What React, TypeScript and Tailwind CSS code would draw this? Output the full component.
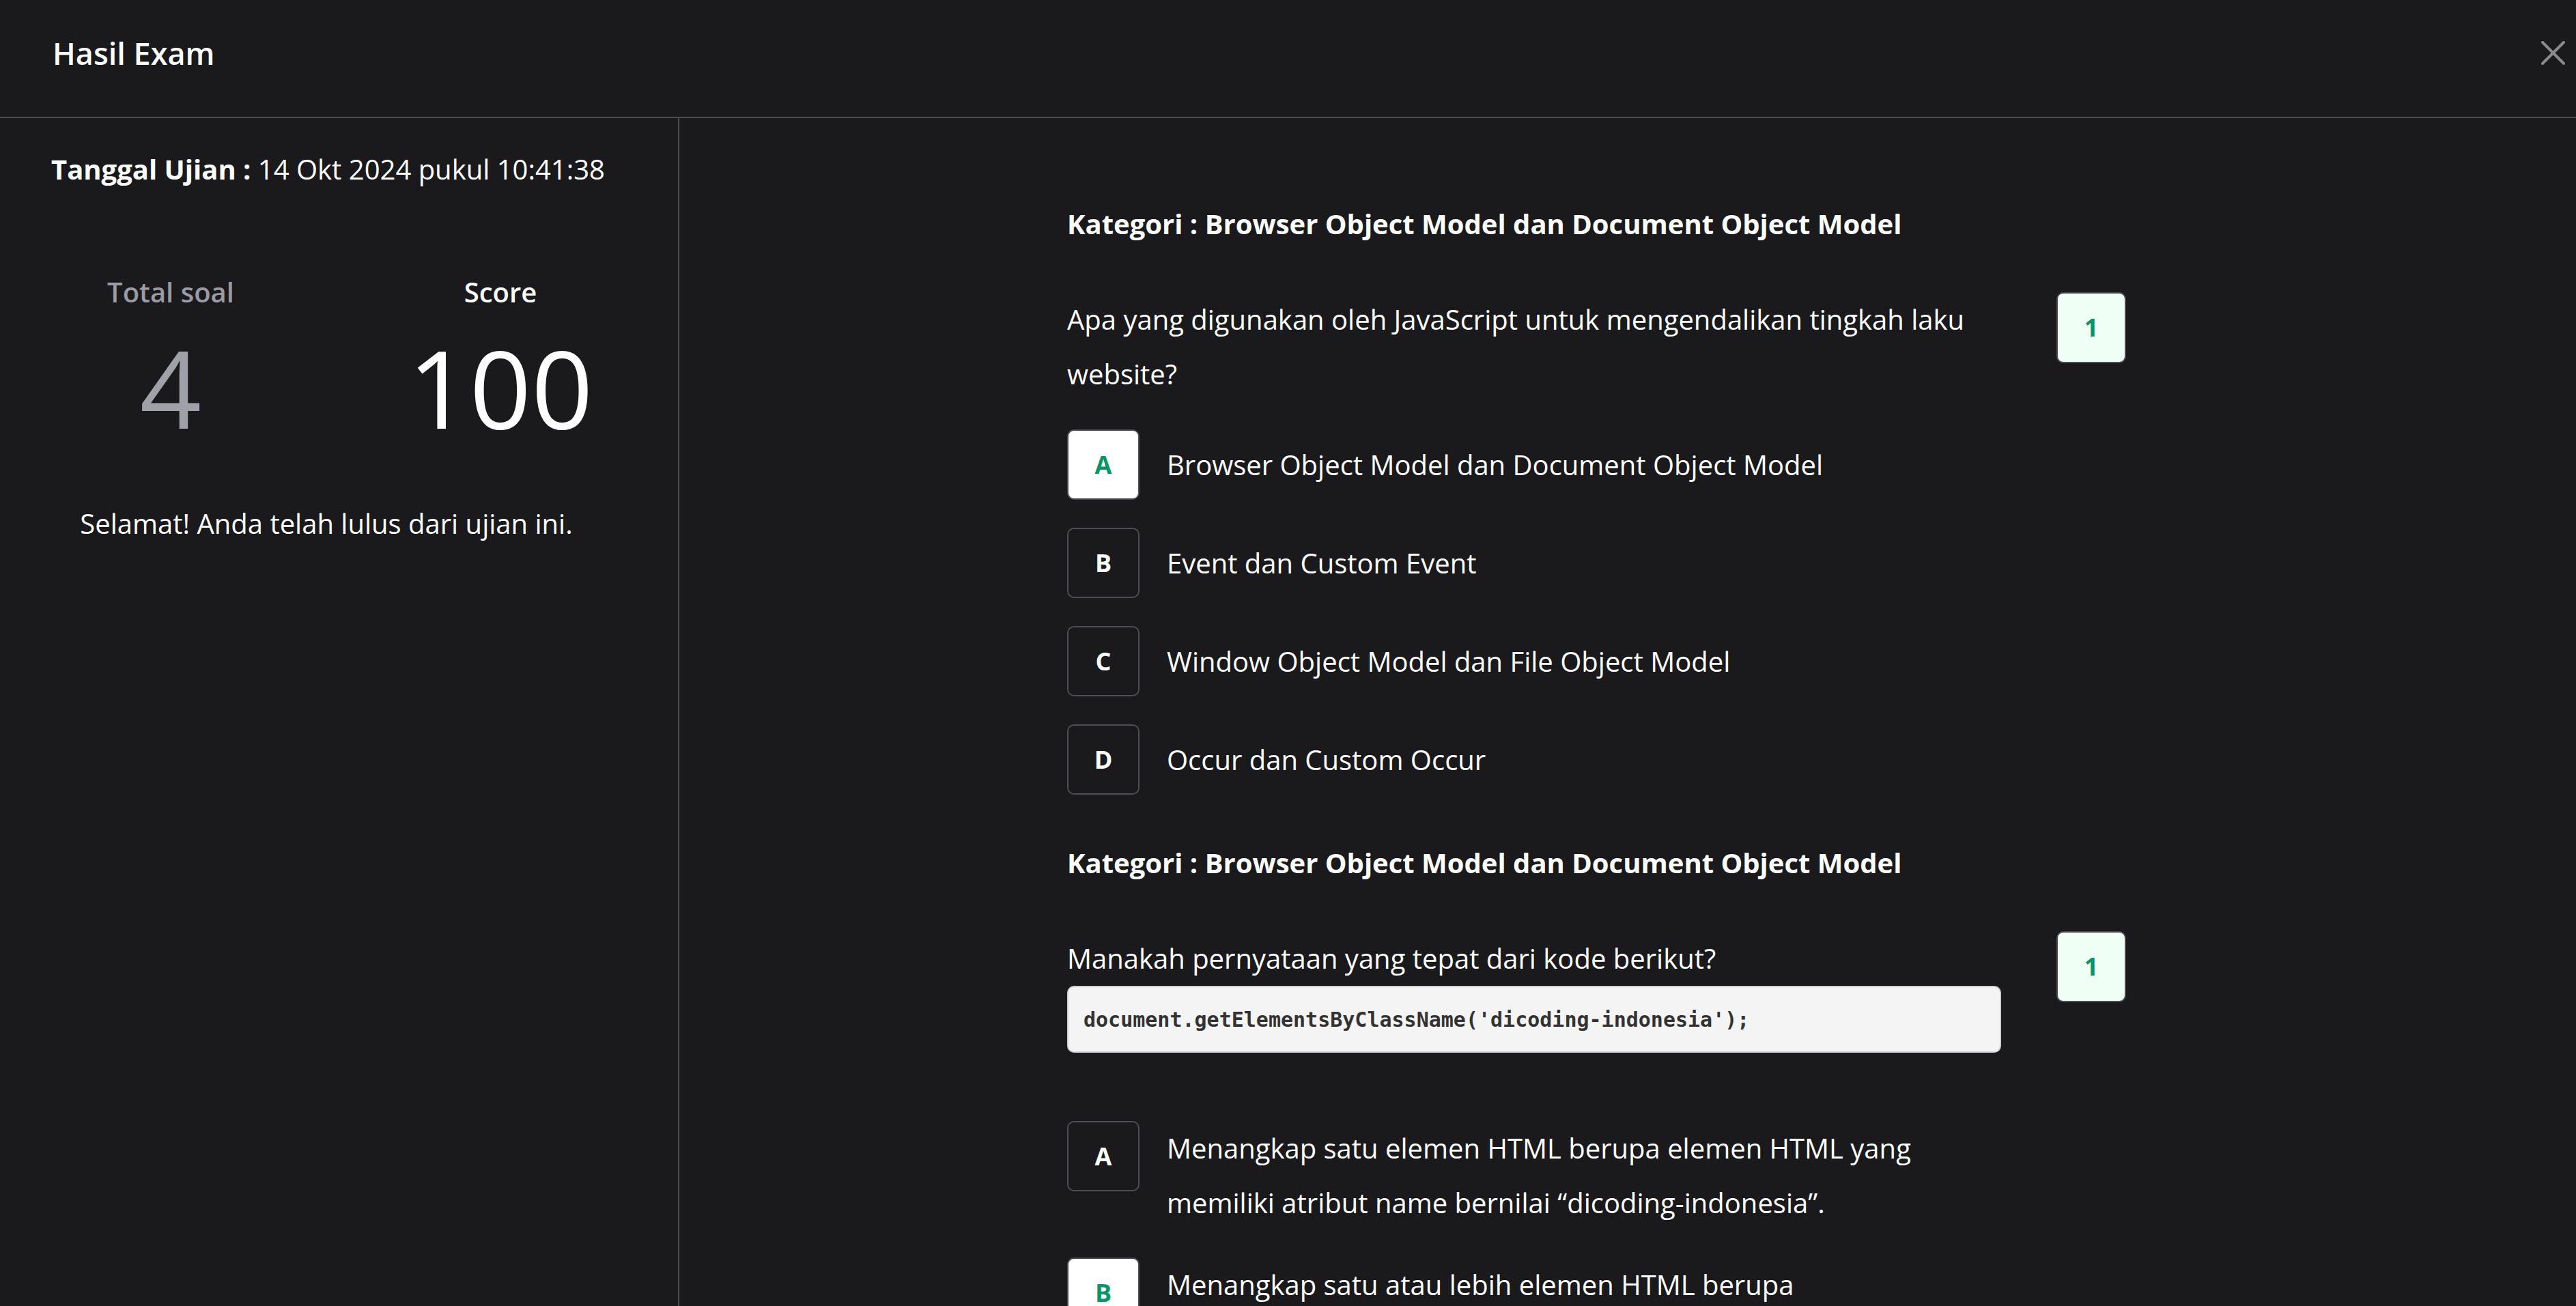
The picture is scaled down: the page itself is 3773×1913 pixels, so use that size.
import React from "react";

type Opt = { letter: string; text: string; correct?: boolean; multi?: boolean };

function OptionRow({ o }: { o: Opt }) {
  return (
    <div className={`flex gap-[40px] ${o.multi ? "items-start" : "items-center"}`}>
      <div
        className={`w-[106px] h-[103px] shrink-0 rounded-[10px] border-2 border-[#4d4d55] flex items-center justify-center text-[36px] font-bold ${
          o.correct ? "bg-white text-[#089668]" : "bg-transparent text-white"
        }`}
      >
        {o.letter}
      </div>
      <div className="max-w-[1160px] text-[40px] leading-[80px] text-white">{o.text}</div>
    </div>
  );
}

function Badge() {
  return (
    <div className="col-span-2 flex justify-center items-start pr-[10px]">
      <div className="w-[102px] h-[104px] rounded-[10px] border-2 border-[#4b4b52] bg-[#effff6] text-[#089668] flex items-center justify-center text-[36px] font-bold">
        1
      </div>
    </div>
  );
}

export default function App() {
  const q1: Opt[] = [
    { letter: "A", text: "Browser Object Model dan Document Object Model", correct: true },
    { letter: "B", text: "Event dan Custom Event" },
    { letter: "C", text: "Window Object Model dan File Object Model" },
    { letter: "D", text: "Occur dan Custom Occur" },
  ];
  const q2: Opt[] = [
    {
      letter: "A",
      text: "Menangkap satu elemen HTML berupa elemen HTML yang memiliki atribut name bernilai \u201cdicoding-indonesia\u201d.",
      multi: true,
    },
    {
      letter: "B",
      text: "Menangkap satu atau lebih elemen HTML berupa HTMLCollection yang memiliki atribut class bernilai \u201cdicoding-indonesia\u201d.",
      correct: true,
      multi: true,
    },
  ];

  return (
    <div
      className="h-screen w-full flex flex-col bg-[#1a1a1d] text-white overflow-hidden"
      style={{ fontFamily: "'Open Sans', 'Noto Sans', sans-serif" }}
    >
      <header className="h-[173px] shrink-0 border-b-2 border-[#4b4b52] flex items-center justify-between pl-[77px] pr-[16px] pb-[16px]">
        <h1 className="text-[45px] font-semibold leading-[66px]">Hasil Exam</h1>
        <button className="w-[35px] h-[35px] flex items-center justify-center" aria-label="close">
          <svg width="35" height="35" viewBox="0 0 35 35" fill="none">
            <path d="M2 2L33 33M33 2L2 33" stroke="#8a8a8c" strokeWidth="4" strokeLinecap="round" />
          </svg>
        </button>
      </header>

      <div className="flex flex-1 min-h-0">
        <aside className="w-[995px] shrink-0 border-r-2 border-[#4b4b52] pl-[75px] pt-[45px]">
          <p className="text-[40px] leading-[60px]">
            <span className="font-bold">Tanggal Ujian :</span> 14 Okt 2024 pukul 10:41:38
          </p>
          <div className="mt-[120px] grid grid-cols-[350px_350px] gap-x-[133px]">
            <div className="flex flex-col items-center">
              <div className="text-[40px] leading-[60px] font-semibold text-[#9b9ba3]">Total soal</div>
              <div className="mt-[30px] text-[158px] leading-[158px] text-[#a0a0a8]">4</div>
            </div>
            <div className="flex flex-col items-center">
              <div className="text-[40px] leading-[60px] font-semibold text-white">Score</div>
              <div className="mt-[30px] text-[158px] leading-[158px] text-white">100</div>
            </div>
          </div>
          <p className="mt-[91px] w-[806px] text-center text-[40px] leading-[60px]">
            Selamat! Anda telah lulus dari ujian ini.
          </p>
        </aside>

        <main className="flex-1 min-w-0">
          <div className="w-[1642px] mx-auto pt-[115px]">
            <section>
              <h2 className="text-[40px] font-bold leading-[80px]">
                Kategori : Browser Object Model dan Document Object Model
              </h2>
              <div className="mt-[60px] grid grid-cols-12">
                <div className="col-span-10">
                  <p className="text-[40px] leading-[80px]">
                    Apa yang digunakan oleh JavaScript untuk mengendalikan tingkah laku website?
                  </p>
                  <div className="mt-[41px] flex flex-col gap-[41px]">
                    {q1.map((o) => (
                      <OptionRow key={o.letter} o={o} />
                    ))}
                  </div>
                </div>
                <Badge />
              </div>
            </section>

            <section className="mt-[60px]">
              <h2 className="text-[40px] font-bold leading-[80px]">
                Kategori : Browser Object Model dan Document Object Model
              </h2>
              <div className="mt-[60px] grid grid-cols-12">
                <div className="col-span-10">
                  <p className="text-[40px] leading-[80px]">Manakah pernyataan yang tepat dari kode berikut?</p>
                  <div className="h-[98px] rounded-[10px] border-2 border-[#d0d0d0] bg-[#f4f4f4] px-[22px] flex items-center">
                    <code
                      className="text-[30px] font-bold text-[#333333]"
                      style={{ fontFamily: "'DejaVu Sans Mono', monospace" }}
                    >
                      document.getElementsByClassName('dicoding-indonesia');
                    </code>
                  </div>
                  <div className="mt-[100px] flex flex-col gap-[40px]">
                    {q2.map((o) => (
                      <OptionRow key={o.letter} o={o} />
                    ))}
                  </div>
                </div>
                <Badge />
              </div>
            </section>
          </div>
        </main>
      </div>
    </div>
  );
}
